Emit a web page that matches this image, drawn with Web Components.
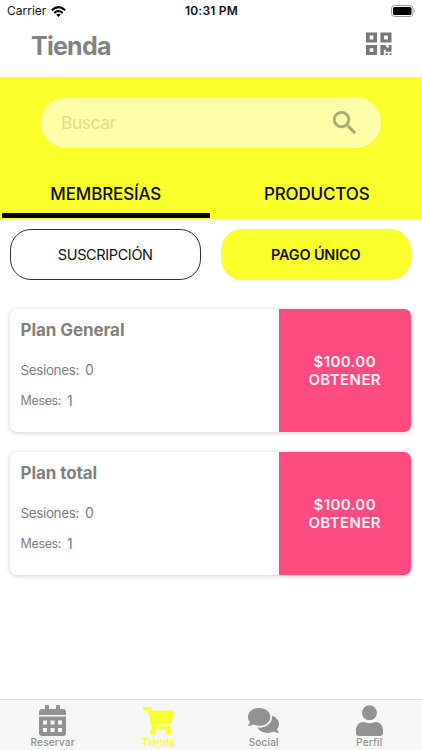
<!DOCTYPE html>
<html lang="es">
<head>
<meta charset="utf-8">
<title>Tienda</title>
<style>
html,body{margin:0;height:100%;background:#fff}
body{font-family:Inter,"Liberation Sans",sans-serif;overflow:hidden}
</style>
</head>
<body>
<store-app></store-app>
<script>
const define = (name, css, html) => customElements.define(name, class extends HTMLElement {
  constructor() {
    super();
    const markup = typeof html === 'function' ? html(this) : html;
    this.attachShadow({mode: 'open'}).innerHTML = `<style>*{box-sizing:border-box}svg{display:block}${css}</style>${markup}`;
  }
});

const icons = {
  calendar: `<svg width="27" height="31" viewBox="0 0 27 31" fill="currentColor"><rect x="6" y="0" width="4" height="7" rx="1"/><rect x="17" y="0" width="4" height="7" rx="1"/><path d="M3 4H24Q27 4 27 7V10H0V7Q0 4 3 4Z"/><path fill-rule="evenodd" d="M0 11.500H27V28Q27 31 24 31H3Q0 31 0 28ZM4 15.500V19.500H8V15.500ZM11.500 15.500V19.500H15.500V15.500ZM19 15.500V19.500H23V15.500ZM4 23V27H8V23ZM11.500 23V27H15.500V23ZM19 23V27H23V23Z"/></svg>`,
  cart: `<svg width="31" height="28" viewBox="0 0 576 512" preserveAspectRatio="none" fill="currentColor"><path d="M528.12 301.319l47.273-208C578.806 78.301 567.391 64 551.99 64H159.208l-9.166-44.81C147.758 8.021 137.93 0 126.529 0H24C10.745 0 0 10.745 0 24v16c0 13.255 10.745 24 24 24h69.883l70.248 343.435C147.325 417.1 136 435.222 136 456c0 30.928 25.072 56 56 56s56-25.072 56-56c0-15.674-6.447-29.835-16.824-40h209.647C430.447 426.165 424 440.326 424 456c0 30.928 25.072 56 56 56s56-25.072 56-56c0-22.172-12.888-41.332-31.579-50.405l5.517-24.276c3.413-15.018-8.002-29.319-23.403-29.319H218.117l-6.545-32h293.145c11.206 0 20.92-7.754 23.403-18.681z"/></svg>`,
  chat: `<svg width="31" height="25" viewBox="0 32 576 448" preserveAspectRatio="none" fill="currentColor"><path d="M416 192c0-88.4-93.1-160-208-160S0 103.6 0 192c0 34.3 14.1 65.900 38 92-13.400 30.200-35.500 54.200-35.800 54.500-2.200 2.300-2.800 5.700-1.500 8.700S4.800 352 8 352c36.600 0 66.900-12.300 88.700-25 32.200 15.700 70.300 25 111.300 25 114.900 0 208-71.600 208-160zm122 220c23.900-26 38-57.700 38-92 0-66.900-53.500-124.200-129.300-148.100.9 6.600 1.300 13.300 1.300 20.100 0 105.900-107.700 192-240 192-10.800 0-21.300-.8-31.700-1.900C207.800 439.600 281.800 480 368 480c41 0 79.100-9.200 111.300-25 21.800 12.700 52.100 25 88.700 25 3.200 0 6.100-1.900 7.300-4.800 1.300-2.900.7-6.300-1.500-8.700-.3-.3-22.400-24.200-35.800-54.500z"/></svg>`,
  person: `<svg width="27" height="31" viewBox="0 0 27 31" fill="currentColor"><circle cx="13.500" cy="7.700" r="7.500"/><path d="M7 17C9 17 10.500 18.200 13.500 18.200S18 17 20 17C24 17 27 21 27 25.500V28Q27 31 24 31H3Q0 31 0 28V25.500C0 21 3 17 7 17Z"/></svg>`
};

define('status-bar', `
:host{display:grid;grid-template-columns:1fr auto 1fr;align-items:center;height:22px;padding:0 6px 0 7px;font-size:12px;color:#111;line-height:22px}
.left{display:flex;align-items:center;gap:5px}
.time{font-weight:600;letter-spacing:.22px}
.battery{justify-self:end}`,
`<div class="left"><span>Carrier</span><svg width="15" height="11" viewBox="0 0 15 11" fill="none" stroke="#000" stroke-width="2"><path d="M.8 4.200Q7.500-2 14.200 4.200M3.300 6.900Q7.500 3 11.700 6.900"/><path d="M5.200 8.600Q7.500 6.800 9.800 8.600L7.500 11Z" fill="#000" stroke="none"/></svg></div>
<span class="time">10:31 PM</span>
<svg class="battery" width="25" height="12" viewBox="0 0 25 12"><rect x=".5" y=".5" width="21.500" height="11" rx="3" fill="#fff" stroke="#999"/><rect x="2" y="2" width="18.500" height="8" rx="1.500"/><path d="M23.300 4Q25 6 23.300 8Z" fill="#999"/></svg>`);

define('page-header', `
:host{display:flex;align-items:center;justify-content:space-between;height:54.500px;padding:0 30px 6px 31px;color:#828282}
h1{margin:0;font-size:25px;line-height:30px;font-weight:700;letter-spacing:-.75px}
svg{margin-top:-4px}`,
`<h1><slot></slot></h1><svg width="26" height="24" viewBox="0 0 27 24" fill="#777"><path fill-rule="evenodd" d="M0 0H11.500V10.500H0ZM3.800 3.300V7.200H7.700V3.300ZM15 0H26.500V10.500H15ZM18.800 3.300V7.200H22.700V3.300ZM0 13H11.500V23.500H0ZM3.800 16.300V20.200H7.700V16.300Z"/><path d="M15 13H20L22 16H23.500V13H26.500V20H20.500V18H18.500V23.500H15ZM20.500 21.500H22.500V23.500H20.500ZM24.500 21.500H26.500V23.500H24.500Z"/></svg>`);

define('search-field', `
:host{display:flex;align-items:center;justify-content:space-between;height:51px;margin:0 41px;padding:0 25px 0 20px;border-radius:26px;background:#ffffa9;color:#dede87;font-size:17.500px;letter-spacing:-.6px}
span{letter-spacing:-.5px}`,
`<span><slot></slot></span><svg width="23" height="23" viewBox="3 3 17.500 17.500" fill="#a9a978" stroke="#a9a978" stroke-width=".3"><path d="M15.500 14h-.79l-.28-.27A6.470 6.470 0 0 0 16 9.500 6.500 6.500 0 1 0 9.500 16c1.610 0 3.090-.59 4.230-1.570l.27.28v.79l5 4.990L20.490 19l-4.990-5zm-6 0C7.010 14 5 11.990 5 9.500S7.010 5 9.500 5 14 7.010 14 9.500 11.990 14 9.500 14z"/></svg>`);

define('section-tab', `
:host{display:flex;flex-direction:column;align-items:center;justify-content:flex-end;height:50px;padding:0 1px 1px 1.500px;font-size:17px;font-weight:500;line-height:22px;color:#0a0a00;letter-spacing:-.15px}
i{width:100%;height:5px;margin-top:8px;border-radius:1px}
:host([active]) i{background:#000}`,
`<span><slot></slot></span><i></i>`);

define('pill-button', `
:host{display:flex;align-items:center;justify-content:center;height:51px;border:1px solid #333;border-radius:21px;font-size:14.500px;color:#111;letter-spacing:-.38px}
:host([selected]){background:#faff2b;border-color:#faff2b;font-weight:600;letter-spacing:-.2px}`,
`<slot></slot>`);

define('plan-card', `
:host{display:flex;height:123px;border-radius:7px;background:#fff;box-shadow:0 1px 5px rgba(0,0,0,.2);overflow:hidden;color:#808080}
.info{flex:1;padding:10px 10.500px}
h2{margin:0;font-size:17px;line-height:22px;font-weight:700;letter-spacing:-.08px}
p{margin:0;display:flex;gap:6px;line-height:20px}
.s{margin-top:19px;font-size:13.500px;letter-spacing:-.38px}
.m{margin-top:11px;font-size:12.500px;letter-spacing:-.35px}
b{font-weight:400;font-size:14px;letter-spacing:0}
.buy{width:132.500px;display:flex;flex-direction:column;justify-content:center;align-items:center;background:#ff4b80;color:#fff0f5;font-weight:600;font-size:15px;line-height:18px;letter-spacing:.4px;padding-top:1px}`,
el => `<div class="info"><h2>${el.getAttribute('name')}</h2><p class="s"><span>Sesiones:</span><b>0</b></p><p class="m"><span>Meses:</span><b>1</b></p></div><div class="buy"><span>$100.00</span><span>OBTENER</span></div>`);

define('nav-item', `
:host{display:flex;flex-direction:column;align-items:center;color:#929292;font-size:10px;font-weight:500;line-height:12px;letter-spacing:.2px}
:host([active]){color:#faff2b;font-weight:600;letter-spacing:0}
.icon{height:31px;display:flex;align-items:center;margin-top:5px}`,
el => `<div class="icon">${icons[el.getAttribute('icon')]}</div><span><slot></slot></span>`);

define('store-app', `
:host{display:flex;flex-direction:column;height:750px;width:422px;background:#fff}
.hero{background:#faff2b;height:142.500px;padding-top:20.500px;display:flex;flex-direction:column;justify-content:space-between}
.tabs,.modes{display:grid;grid-template-columns:1fr 1fr}
.modes{gap:20px;padding:10px 11px 0 10px}
.plans{display:grid;gap:20px;padding:29px 11px 0 10px}
nav{margin-top:auto;height:51px;display:grid;grid-template-columns:repeat(4,1fr);background:#f6f6f6;border-top:1px solid #d9d9d9}`,
`<status-bar></status-bar>
<page-header>Tienda</page-header>
<div class="hero"><search-field>Buscar</search-field><div class="tabs"><section-tab active>MEMBRESÍAS</section-tab><section-tab>PRODUCTOS</section-tab></div></div>
<div class="modes"><pill-button>SUSCRIPCIÓN</pill-button><pill-button selected>PAGO ÚNICO</pill-button></div>
<div class="plans"><plan-card name="Plan General"></plan-card><plan-card name="Plan total"></plan-card></div>
<nav><nav-item icon="calendar">Reservar</nav-item><nav-item icon="cart" active>Tienda</nav-item><nav-item icon="chat">Social</nav-item><nav-item icon="person">Perfil</nav-item></nav>`);
</script>
</body>
</html>
